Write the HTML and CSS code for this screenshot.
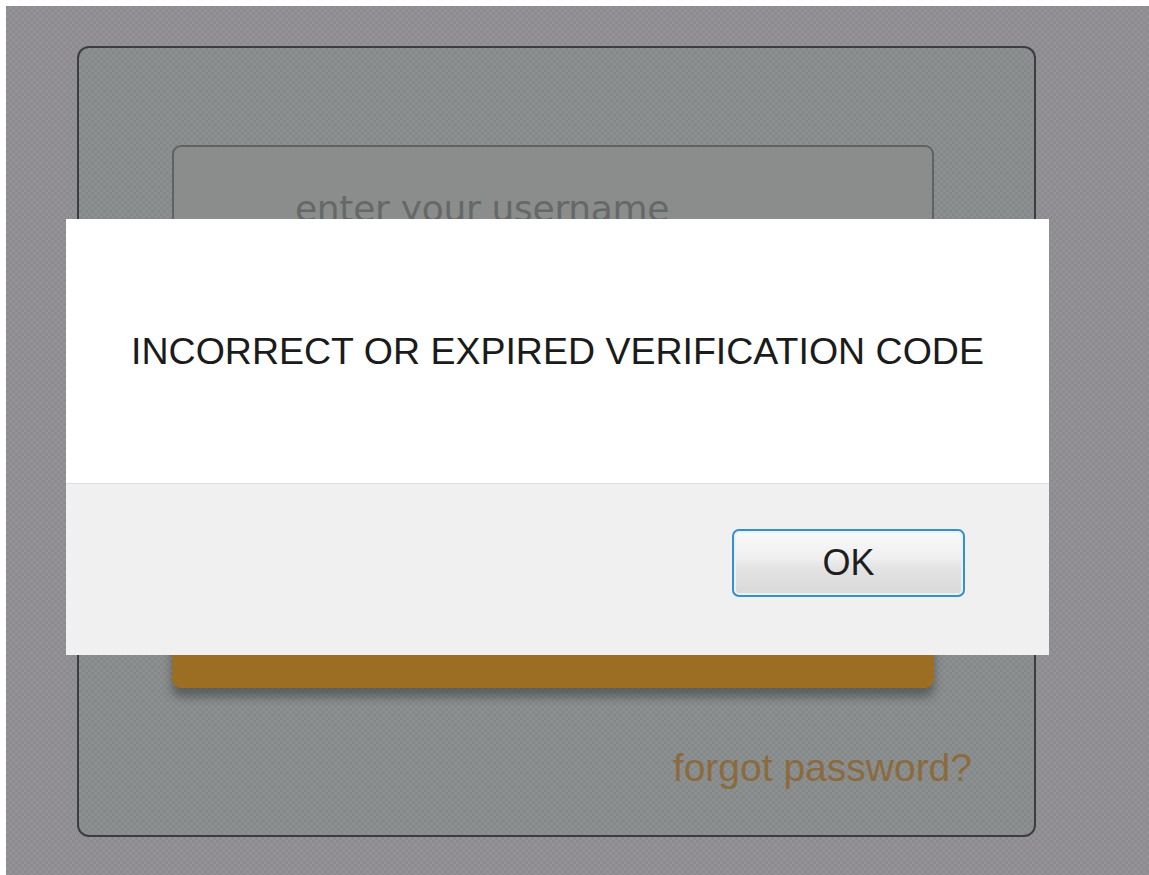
FILE: index.html
```html
<!DOCTYPE html>
<html lang="en">
<head>
<meta charset="utf-8">
<title>Sign in</title>
<link rel="stylesheet" href="styles.css">
</head>
<body>
<div class="stage">
  <form class="card" onsubmit="return false">
    <div class="field"><span class="placeholder">enter your username</span></div>
    <div class="field field-password"></div>
    <button class="submit" type="submit" aria-label="sign in"></button>
    <div class="links"><a class="forgot" href="#">forgot password?</a></div>
  </form>
</div>

<div class="dialog" role="alertdialog" aria-labelledby="dlg-msg">
  <div class="dialog-body">
    <p class="dialog-msg" id="dlg-msg">INCORRECT OR EXPIRED VERIFICATION CODE</p>
  </div>
  <div class="dialog-footer">
    <button class="dialog-ok" type="button">OK</button>
  </div>
</div>
</body>
</html>
```

FILE: styles.css
```css
html, body {
  margin: 0;
  height: 100%;
}

body {
  background: #ffffff;
  padding: 6px 0 0 6px;
  box-sizing: border-box;
  font-family: "Liberation Sans", Arial, sans-serif;
  overflow: hidden;
}

/* page backdrop with a faint woven texture */
.stage {
  height: 100%;
  background-color: #918e93;
  background-image:
    repeating-conic-gradient(rgba(255,255,255,0.035) 0 25%, rgba(0,0,0,0.025) 0 50%);
  background-size: 6px 6px;
  padding: 40px 0 0 71px;
  box-sizing: border-box;
}

/* login panel */
.card {
  width: 959px;
  height: 791px;
  box-sizing: border-box;
  border: 2px solid #3b3e3e;
  border-radius: 12px;
  background-color: #888c8c;
  background-image:
    repeating-conic-gradient(rgba(255,255,255,0.03) 0 25%, rgba(0,0,0,0.02) 0 50%);
  background-size: 6px 6px;
  padding: 97px 0 0 93px;
  display: flex;
  flex-direction: column;
}

.field {
  width: 762px;
  height: 92px;
  flex: none;
  box-sizing: border-box;
  border: 2px solid #5f6363;
  border-radius: 9px;
  background: #8b8d8d;
  padding: 42px 0 0 121px;
  margin-bottom: 30px;
}

.placeholder {
  font-family: "DejaVu Sans", sans-serif;
  font-size: 36px;
  line-height: 40px;
  color: #666868;
  letter-spacing: -0.3px;
  white-space: nowrap;
}

.submit {
  width: 762px;
  height: 58px;
  flex: none;
  margin-top: 241px;
  border: 0;
  border-radius: 9px;
  background: #9c6e24;
  box-shadow: 0 9px 10px rgba(40, 40, 40, 0.45);
}

.links {
  margin-top: 57px;
  padding-right: 62px;
  text-align: right;
}

.forgot {
  font-size: 39px;
  line-height: 45px;
  color: #8b6b3e;
  text-decoration: none;
}

/* modal alert */
.dialog {
  position: fixed;
  left: 66px;
  top: 219px;
  width: 983px;
  height: 436px;
  display: flex;
  flex-direction: column;
  background: #ffffff;
}

.dialog-body {
  height: 265px;
  flex: none;
  display: flex;
  align-items: center;
  justify-content: center;
  border-bottom: 1px solid #dedede;
  box-sizing: border-box;
}

.dialog-msg {
  margin: 0;
  font-size: 37.5px;
  color: #1b1b1b;
  text-align: center;
}

.dialog-footer {
  flex: 1;
  background: #f0f0f0;
  display: flex;
  justify-content: flex-end;
  align-items: flex-start;
  padding: 45px 84px 0 0;
}

.dialog-ok {
  width: 233px;
  height: 68px;
  box-sizing: border-box;
  border: 2px solid #3c8dc5;
  border-radius: 7px;
  background: linear-gradient(#f9f9f9 0%, #f0f0f0 40%, #e2e2e2 60%, #d9d9d9 100%);
  box-shadow: inset 0 0 0 2px #e2f4fd;
  font-family: inherit;
  font-size: 36px;
  color: #1e1e1e;
  padding: 0;
}
```
